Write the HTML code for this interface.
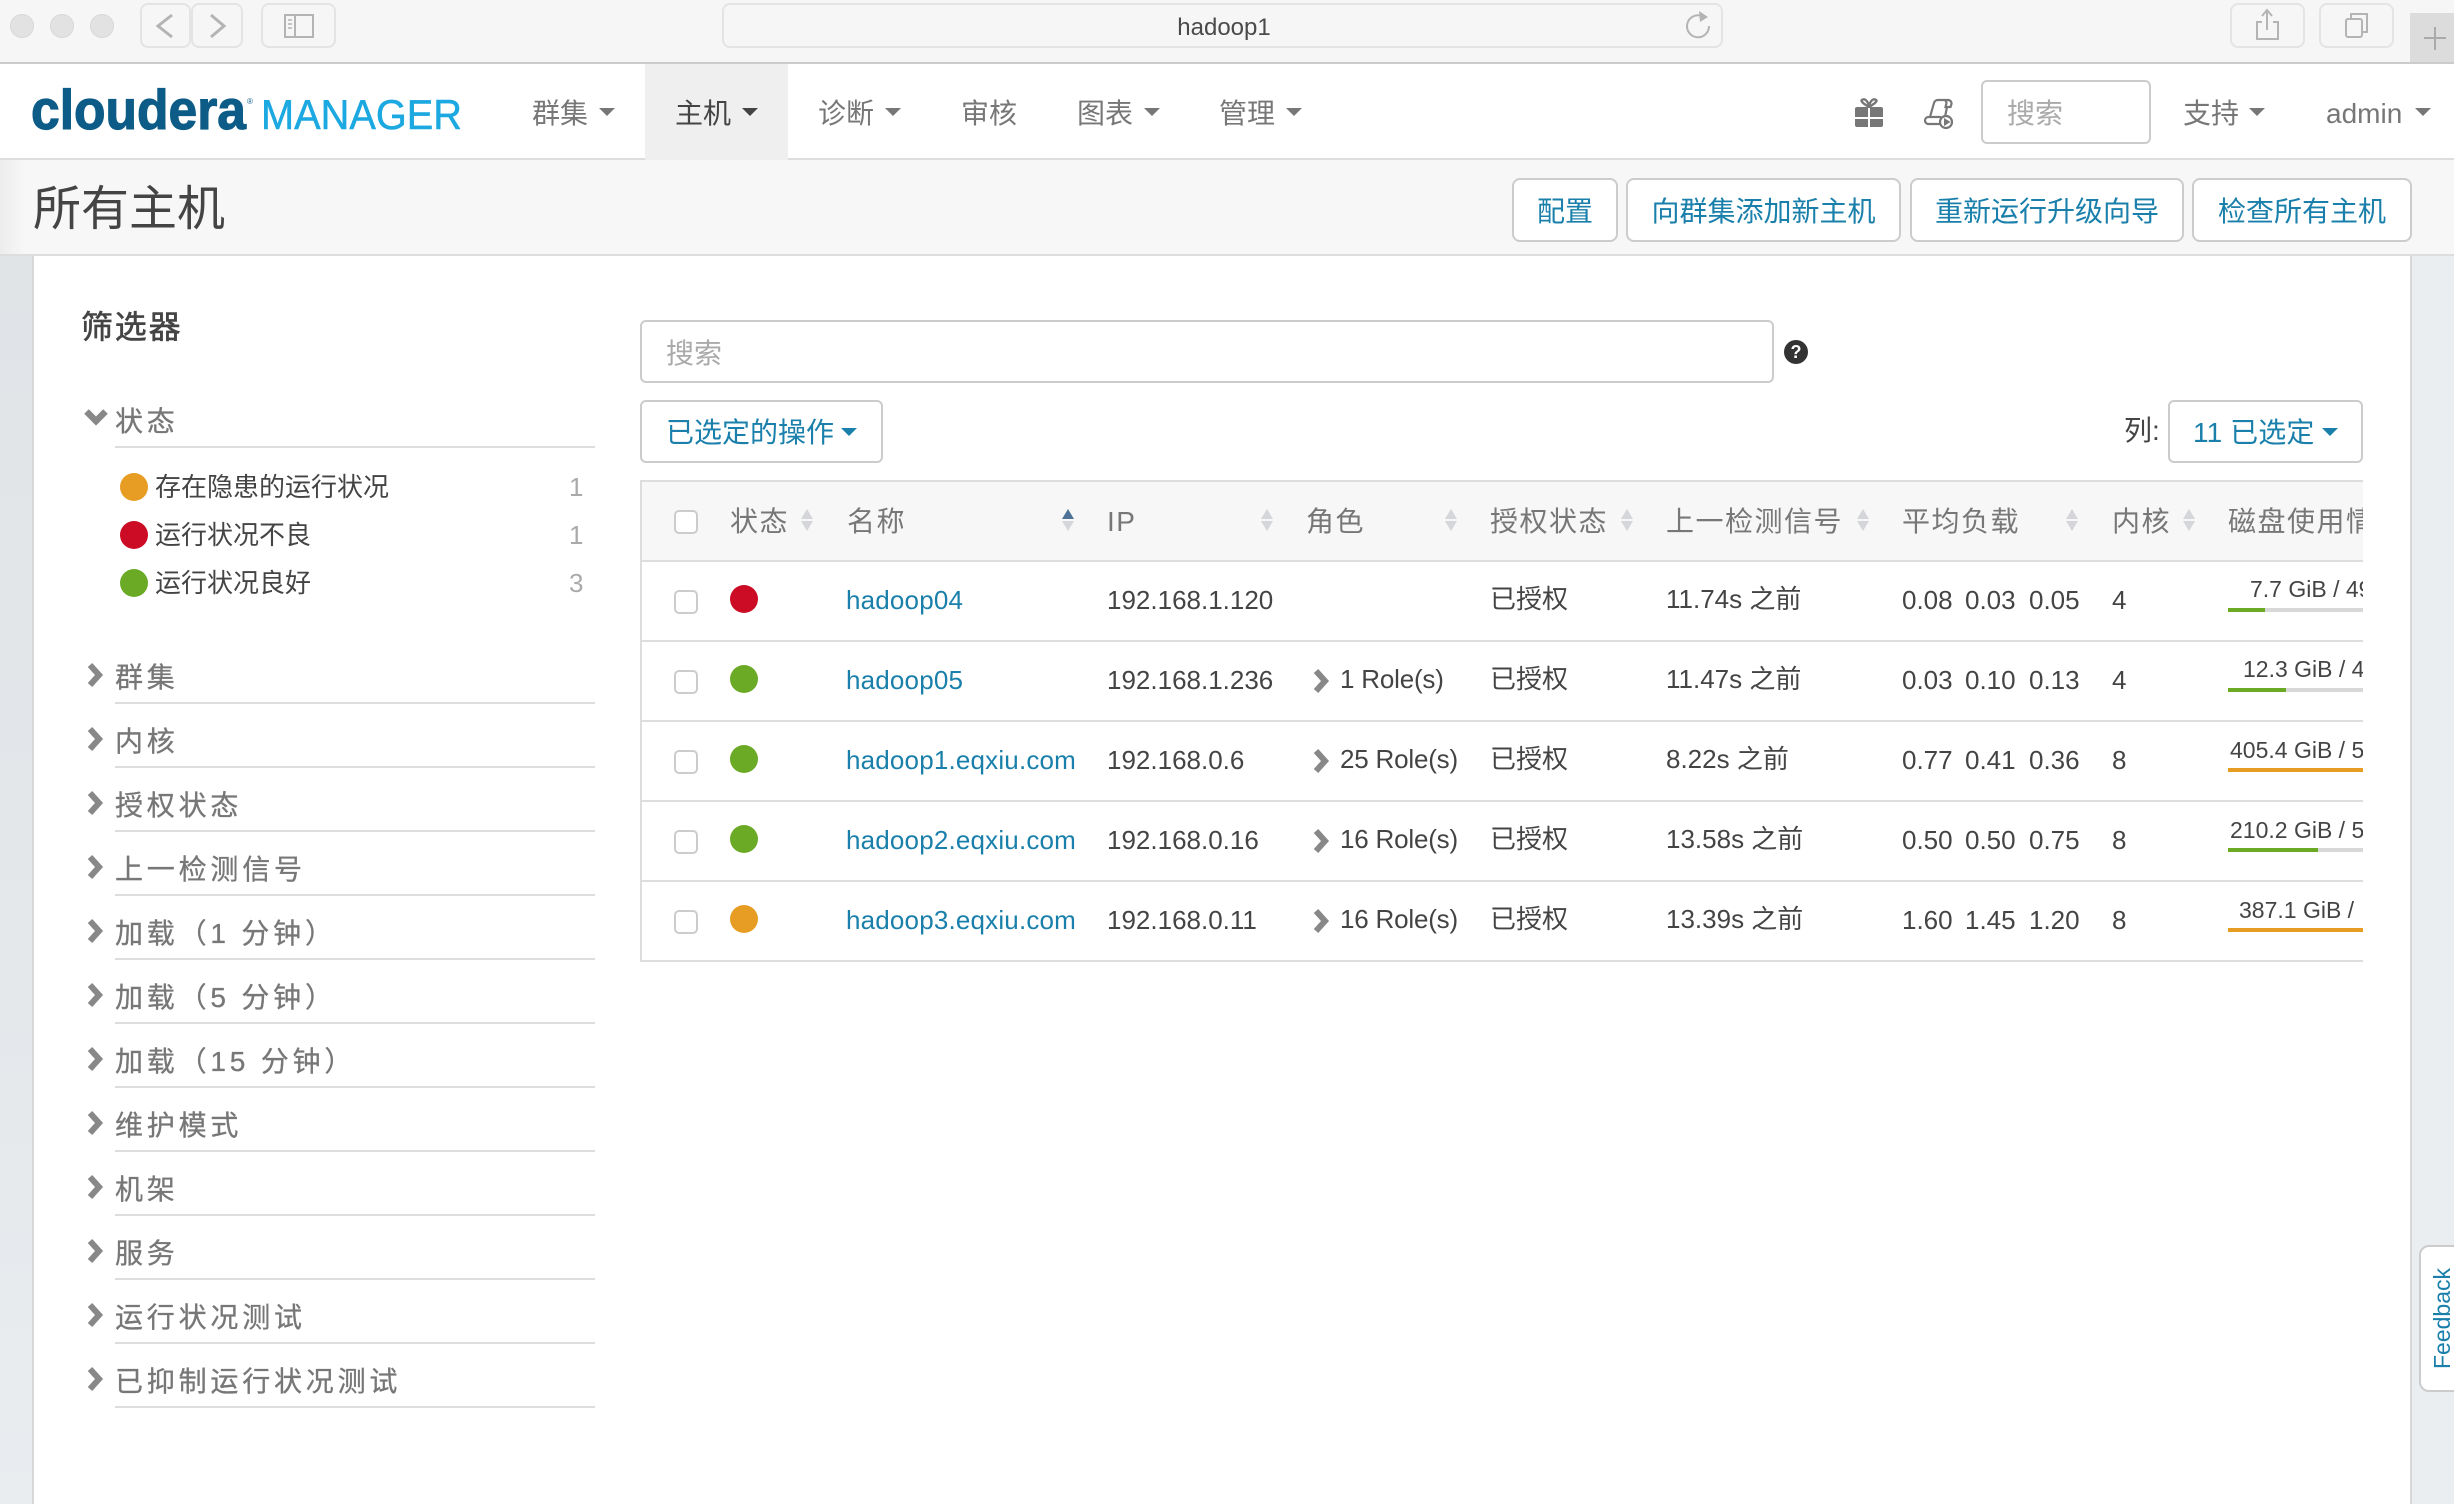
<!DOCTYPE html>
<html lang="zh-CN"><head><meta charset="utf-8"><title>所有主机</title>
<style>
html,body{margin:0;padding:0;width:2454px;height:1504px;overflow:hidden;background:#fff}
body{position:relative;font-family:"Liberation Sans","Noto Sans CJK SC",sans-serif;font-size:26px;color:#444}
.a{position:absolute;box-sizing:border-box}
.t{position:absolute;white-space:nowrap;line-height:40px;height:40px}
.tb{position:absolute;box-sizing:border-box;top:3px;height:45px;border:2px solid #e4e4e4;border-radius:8px;background:#f6f6f6}
.n{font-size:28px;color:#777;margin-top:2px}
.ar{position:absolute;width:0;height:0;border-left:8px solid transparent;border-right:8px solid transparent;border-top:8px solid #777}
.btn{position:absolute;box-sizing:border-box;top:178px;height:64px;background:#fff;border:2px solid #ccc;border-radius:8px;color:#1a80ab;font-size:28px;line-height:63px;text-align:center;white-space:nowrap}
.f{font-size:28px;color:#777;letter-spacing:3.8px;left:115px;margin-top:2px;-webkit-text-stroke:.3px #777}
.u{position:absolute;left:115px;width:480px;height:2px;background:#ddd}
.dot{position:absolute;width:28px;height:28px;border-radius:50%}
.g{background:#6aaa25}.r{background:#cc0b25}.o{background:#e79d24}
.h{font-size:28px;color:#777;letter-spacing:1.5px;top:502px}
.s{position:absolute;top:509px;width:13px;height:22px}
.s:before,.s:after{content:"";position:absolute;left:0;width:0;height:0;border-left:6.5px solid transparent;border-right:6.5px solid transparent}
.s:before{top:0;border-bottom:10px solid #d4d6d9}
.s:after{bottom:0;border-top:10px solid #d4d6d9}
.s.on:before{border-bottom-color:#4f7299}
.hl{position:absolute;left:640px;width:1723px;height:2px;background:#ddd}
.cb{position:absolute;left:674px;width:24px;height:24px;box-sizing:border-box;border:2px solid #ccc;border-radius:5px;background:#fff}
.l{color:#1a80ab}
.nm{letter-spacing:.18px}
.ro{letter-spacing:-.2px}
.bar{position:absolute;left:2228px;width:135px;height:4px;background:#d8d8d8;overflow:hidden}
.bar i{display:block;height:4px}
.dk{position:absolute;white-space:nowrap;font-size:23px;line-height:30px;height:30px;overflow:hidden;color:#444}
</style></head><body>

<!-- browser toolbar -->
<div class="a" style="left:0;top:0;width:2454px;height:64px;background:#f6f6f6;border-bottom:2px solid #ccc"></div>
<div class="dot" style="left:10px;top:14px;width:24px;height:24px;background:#e2e2e2;border:1px solid #d8d8d8;box-sizing:border-box"></div>
<div class="dot" style="left:50px;top:14px;width:24px;height:24px;background:#e2e2e2;border:1px solid #d8d8d8;box-sizing:border-box"></div>
<div class="dot" style="left:90px;top:14px;width:24px;height:24px;background:#e2e2e2;border:1px solid #d8d8d8;box-sizing:border-box"></div>
<div class="tb" style="left:140px;width:51px"></div>
<div class="tb" style="left:191px;width:52px"></div>
<div class="tb" style="left:261px;width:75px"></div>
<div class="tb" style="left:722px;width:1001px"></div>
<div class="tb" style="left:2230px;width:75px"></div>
<div class="tb" style="left:2319px;width:75px"></div>
<div class="a" style="left:2410px;top:13px;width:44px;height:49px;background:#dcdcdc"></div>
<svg class="a" style="left:0;top:0" width="2454" height="64" fill="none" stroke="#b4b4b4" stroke-width="2.5">
<path d="M172 15 L158 26 L172 37" stroke-width="3"/>
<path d="M211 15 L224 26 L211 37" stroke-width="3"/>
<rect x="285" y="15" width="28" height="22" stroke-width="2"/><path d="M295 15V37" stroke-width="2"/><path d="M288 20h4M288 24h4M288 28h4" stroke-width="1.5"/>
<path d="M1702 16 A11 11 0 1 0 1709 26" stroke-width="2"/><path d="M1699 11 L1708 17 L1700 22Z" fill="#b4b4b4" stroke="none"/>
<path d="M2262 22h-5v17h21v-17h-5" stroke-width="2"/><path d="M2267 30V11M2262 16l5-6 5 6" stroke-width="2"/>
<rect x="2346" y="19" width="16" height="18" rx="2" stroke-width="2"/><path d="M2351 19v-5h16v18h-5" stroke-width="2"/>
<path d="M2435 27v23M2424 38h22" stroke-width="2" stroke="#aaa"/>
</svg>
<div class="t" style="left:1174px;top:8px;font-size:24px;width:100px;text-align:center;color:#4a4a4a">hadoop1</div>

<!-- nav -->
<div class="a" style="left:0;top:64px;width:2454px;height:96px;background:#fff;border-bottom:2px solid #ddd"></div>
<div class="a" style="left:645px;top:64px;width:143px;height:96px;background:#f0eff0"></div>
<svg class="a" style="left:20px;top:80px" width="450" height="60">
<text x="11" y="49" font-family="Liberation Sans" font-weight="700" font-size="56" fill="#0d5c87" textLength="215" lengthAdjust="spacingAndGlyphs" stroke="#0d5c87" stroke-width="1.2">cloudera</text>
<text x="227" y="24" font-family="Liberation Sans" font-size="8" fill="#0d5c87">®</text>
<text x="241" y="49" font-family="Liberation Sans" font-size="42" fill="#1ca8e0" stroke="#1ca8e0" stroke-width=".5" textLength="201" lengthAdjust="spacingAndGlyphs">MANAGER</text>
</svg>
<div class="t n" style="left:532px;top:92px">群集</div><div class="ar" style="left:599px;top:108px"></div>
<div class="t n" style="left:675px;top:92px;color:#444">主机</div><div class="ar" style="left:742px;top:108px;border-top-color:#444"></div>
<div class="t n" style="left:818px;top:92px">诊断</div><div class="ar" style="left:885px;top:108px"></div>
<div class="t n" style="left:961px;top:92px">审核</div>
<div class="t n" style="left:1077px;top:92px">图表</div><div class="ar" style="left:1144px;top:108px"></div>
<div class="t n" style="left:1219px;top:92px">管理</div><div class="ar" style="left:1286px;top:108px"></div>
<svg class="a" style="left:1850px;top:92px" width="115" height="42" fill="none">
<path d="M19 15C14 12 10 9 12 8C14 6 18 8 19 15C20 8 24 6 26 8C28 9 24 12 19 15Z" stroke="#777" stroke-width="2.4"/>
<path d="M7 15H18V25H5V17a2 2 0 0 1 2-2ZM20 15H31a2 2 0 0 1 2 2V25H20ZM5 27H18V35H7a2 2 0 0 1-2-2ZM20 27H33V33a2 2 0 0 1-2 2H20Z" fill="#777"/>
<g stroke="#777" stroke-width="2.200">
<path d="M80 25L84 11a4 4 0 0 1 4-3H98a3.500 3.500 0 0 1 3.500 4l-1 3h-5l1-4a3 3 0 0 0-3-3"/>
<path d="M97 15L95 25"/>
<rect x="75" y="25" width="18" height="7" rx="3.500"/>
<circle cx="96" cy="30" r="6" fill="#fff"/>
</g>
<path d="M94 26L100.500 30L94 34Z" fill="#777"/>
</svg>
<div class="a" style="left:1981px;top:80px;width:170px;height:64px;border:2px solid #ccc;border-radius:6px;background:#fff"></div>
<div class="t" style="left:2007px;top:94px;font-size:28px;color:#aaa">搜索</div>
<div class="t n" style="left:2183px;top:92px">支持</div><div class="ar" style="left:2249px;top:108px"></div>
<div class="t n" style="left:2326px;top:92px">admin</div><div class="ar" style="left:2415px;top:108px"></div>

<!-- subheader -->
<div class="a" style="left:0;top:160px;width:2454px;height:96px;background:#f7f7f7;border-bottom:2px solid #ddd"></div>
<div class="a" style="left:0;top:160px;width:24px;height:94px;background:linear-gradient(90deg,#ececec,#f7f7f7)"></div>
<div class="t" style="left:33px;top:190px;font-size:48px;color:#444;height:40px;line-height:40px">所有主机</div>
<div class="btn" style="left:1512px;width:106px">配置</div>
<div class="btn" style="left:1626px;width:275px">向群集添加新主机</div>
<div class="btn" style="left:1910px;width:274px">重新运行升级向导</div>
<div class="btn" style="left:2192px;width:220px">检查所有主机</div>

<!-- gutters -->
<div class="a" style="left:0;top:256px;width:34px;height:1248px;background:linear-gradient(180deg,#e0e4e7,#e4e8eb 60%,#e9edf0);border-right:2px solid #d8d8d8"></div>
<div class="a" style="left:2410px;top:256px;width:44px;height:1248px;background:#ebeef1;border-left:2px solid #d8d8d8"></div>

<!-- filter -->
<div class="t" style="left:81px;top:307px;font-size:32px;color:#444;letter-spacing:1.8px;-webkit-text-stroke:.6px #444">筛选器</div>
<svg class="a" style="left:80px;top:400px" width="32" height="30" fill="none"><path d="M6.500 11.500 L16 21 L25.500 11.500" stroke="#888" stroke-width="6.500"/></svg>
<div class="t f" style="top:400px">状态</div><div class="u" style="top:446px"></div>
<div class="dot o" style="left:120px;top:473px"></div><div class="t" style="left:155px;top:467px">存在隐患的运行状况</div><div class="t" style="left:569px;top:467px;color:#aaa">1</div>
<div class="dot r" style="left:120px;top:521px"></div><div class="t" style="left:155px;top:515px">运行状况不良</div><div class="t" style="left:569px;top:515px;color:#aaa">1</div>
<div class="dot g" style="left:120px;top:569px"></div><div class="t" style="left:155px;top:563px">运行状况良好</div><div class="t" style="left:569px;top:563px;color:#aaa">3</div>

<svg width="0" height="0" style="position:absolute"><symbol id="c" viewBox="0 0 24 30"><path d="M7 5 L16 15 L7 25" fill="none" stroke="#888" stroke-width="6"/></symbol></svg>
<svg class="a" style="left:83px;top:660px" width="24" height="30"><use href="#c"/></svg><div class="t f" style="top:656px">群集</div><div class="u" style="top:702px"></div>
<svg class="a" style="left:83px;top:724px" width="24" height="30"><use href="#c"/></svg><div class="t f" style="top:720px">内核</div><div class="u" style="top:766px"></div>
<svg class="a" style="left:83px;top:788px" width="24" height="30"><use href="#c"/></svg><div class="t f" style="top:784px">授权状态</div><div class="u" style="top:830px"></div>
<svg class="a" style="left:83px;top:852px" width="24" height="30"><use href="#c"/></svg><div class="t f" style="top:848px">上一检测信号</div><div class="u" style="top:894px"></div>
<svg class="a" style="left:83px;top:916px" width="24" height="30"><use href="#c"/></svg><div class="t f" style="top:912px">加载（1 分钟）</div><div class="u" style="top:958px"></div>
<svg class="a" style="left:83px;top:980px" width="24" height="30"><use href="#c"/></svg><div class="t f" style="top:976px">加载（5 分钟）</div><div class="u" style="top:1022px"></div>
<svg class="a" style="left:83px;top:1044px" width="24" height="30"><use href="#c"/></svg><div class="t f" style="top:1040px">加载（15 分钟）</div><div class="u" style="top:1086px"></div>
<svg class="a" style="left:83px;top:1108px" width="24" height="30"><use href="#c"/></svg><div class="t f" style="top:1104px">维护模式</div><div class="u" style="top:1150px"></div>
<svg class="a" style="left:83px;top:1172px" width="24" height="30"><use href="#c"/></svg><div class="t f" style="top:1168px">机架</div><div class="u" style="top:1214px"></div>
<svg class="a" style="left:83px;top:1236px" width="24" height="30"><use href="#c"/></svg><div class="t f" style="top:1232px">服务</div><div class="u" style="top:1278px"></div>
<svg class="a" style="left:83px;top:1300px" width="24" height="30"><use href="#c"/></svg><div class="t f" style="top:1296px">运行状况测试</div><div class="u" style="top:1342px"></div>
<svg class="a" style="left:83px;top:1364px" width="24" height="30"><use href="#c"/></svg><div class="t f" style="top:1360px">已抑制运行状况测试</div><div class="u" style="top:1406px"></div>

<!-- search + actions -->
<div class="a" style="left:640px;top:320px;width:1134px;height:63px;border:2px solid #ccc;border-radius:6px;background:#fff"></div>
<div class="t" style="left:666px;top:334px;font-size:28px;color:#aaa">搜索</div>
<div class="dot" style="left:1784px;top:340px;width:24px;height:24px;background:#333;color:#fff;font-size:18px;font-weight:700;line-height:24px;text-align:center">?</div>
<div class="a" style="left:640px;top:400px;width:243px;height:63px;border:2px solid #ccc;border-radius:6px;background:#fff"></div>
<div class="t l" style="left:666px;top:413px;font-size:28px">已选定的操作</div><div class="ar" style="left:841px;top:428px;border-top-color:#1a80ab"></div>
<div class="t" style="left:2124px;top:411px;font-size:28px">列:</div>
<div class="a" style="left:2168px;top:400px;width:195px;height:63px;border:2px solid #ccc;border-radius:6px;background:#fff"></div>
<div class="t l" style="left:2193px;top:413px;font-size:28px;letter-spacing:.1px">11 已选定</div><div class="ar" style="left:2322px;top:428px;border-top-color:#1a80ab"></div>

<!-- table -->
<div class="a" style="left:640px;top:480px;width:1723px;height:82px;background:#f7f7f7"></div>
<div class="hl" style="top:480px"></div><div class="hl" style="top:560px"></div><div class="hl" style="top:640px"></div><div class="hl" style="top:720px"></div><div class="hl" style="top:800px"></div><div class="hl" style="top:880px"></div><div class="hl" style="top:960px"></div>
<div class="a" style="left:640px;top:480px;width:2px;height:482px;background:#ddd"></div>
<div class="cb" style="top:510px"></div>
<div class="t h" style="left:730px">状态</div><div class="s" style="left:801px"></div>
<div class="t h" style="left:847px">名称</div><div class="s on" style="left:1062px"></div>
<div class="t h" style="left:1107px">IP</div><div class="s" style="left:1261px"></div>
<div class="t h" style="left:1306px">角色</div><div class="s" style="left:1445px"></div>
<div class="t h" style="left:1490px">授权状态</div><div class="s" style="left:1621px"></div>
<div class="t h" style="left:1666px">上一检测信号</div><div class="s" style="left:1857px"></div>
<div class="t h" style="left:1902px">平均负载</div><div class="s" style="left:2066px"></div>
<div class="t h" style="left:2112px">内核</div><div class="s" style="left:2183px"></div>
<div class="t h" style="left:2228px;width:135px;overflow:hidden">磁盘使用情况</div>

<!-- row 1 -->
<div class="cb" style="top:590px"></div><div class="dot r" style="left:730px;top:585px"></div>
<div class="t l nm" style="left:846px;top:580px">hadoop04</div><div class="t" style="left:1107px;top:580px">192.168.1.120</div>
<div class="t" style="left:1490px;top:579px">已授权</div><div class="t" style="left:1666px;top:579px">11.74s 之前</div>
<div class="t" style="left:1902px;top:580px">0.08</div><div class="t" style="left:1965px;top:580px">0.03</div><div class="t" style="left:2029px;top:580px">0.05</div><div class="t" style="left:2112px;top:580px">4</div>
<div class="dk" style="left:2250px;top:574px;width:113px">7.7 GiB / 49.1 GiB</div><div class="bar" style="top:608px"><i class="g" style="width:37px"></i></div>
<!-- row 2 -->
<div class="cb" style="top:670px"></div><div class="dot g" style="left:730px;top:665px"></div>
<div class="t l nm" style="left:846px;top:660px">hadoop05</div><div class="t" style="left:1107px;top:660px">192.168.1.236</div>
<svg class="a" style="left:1309px;top:666px" width="24" height="30"><use href="#c"/></svg><div class="t ro" style="left:1340px;top:659px">1 Role(s)</div>
<div class="t" style="left:1490px;top:659px">已授权</div><div class="t" style="left:1666px;top:659px">11.47s 之前</div>
<div class="t" style="left:1902px;top:660px">0.03</div><div class="t" style="left:1965px;top:660px">0.10</div><div class="t" style="left:2029px;top:660px">0.13</div><div class="t" style="left:2112px;top:660px">4</div>
<div class="dk" style="left:2243px;top:654px;width:120px">12.3 GiB / 49.1 GiB</div><div class="bar" style="top:688px"><i class="g" style="width:58px"></i></div>
<!-- row 3 -->
<div class="cb" style="top:750px"></div><div class="dot g" style="left:730px;top:745px"></div>
<div class="t l nm" style="left:846px;top:740px">hadoop1.eqxiu.com</div><div class="t" style="left:1107px;top:740px">192.168.0.6</div>
<svg class="a" style="left:1309px;top:746px" width="24" height="30"><use href="#c"/></svg><div class="t ro" style="left:1340px;top:739px">25 Role(s)</div>
<div class="t" style="left:1490px;top:739px">已授权</div><div class="t" style="left:1666px;top:739px">8.22s 之前</div>
<div class="t" style="left:1902px;top:740px">0.77</div><div class="t" style="left:1965px;top:740px">0.41</div><div class="t" style="left:2029px;top:740px">0.36</div><div class="t" style="left:2112px;top:740px">8</div>
<div class="dk" style="left:2230px;top:735px;width:133px">405.4 GiB / 5.4 TiB</div><div class="bar" style="top:768px"><i class="o" style="width:135px"></i></div>
<!-- row 4 -->
<div class="cb" style="top:830px"></div><div class="dot g" style="left:730px;top:825px"></div>
<div class="t l nm" style="left:846px;top:820px">hadoop2.eqxiu.com</div><div class="t" style="left:1107px;top:820px">192.168.0.16</div>
<svg class="a" style="left:1309px;top:826px" width="24" height="30"><use href="#c"/></svg><div class="t ro" style="left:1340px;top:819px">16 Role(s)</div>
<div class="t" style="left:1490px;top:819px">已授权</div><div class="t" style="left:1666px;top:819px">13.58s 之前</div>
<div class="t" style="left:1902px;top:820px">0.50</div><div class="t" style="left:1965px;top:820px">0.50</div><div class="t" style="left:2029px;top:820px">0.75</div><div class="t" style="left:2112px;top:820px">8</div>
<div class="dk" style="left:2230px;top:815px;width:133px">210.2 GiB / 5.4 TiB</div><div class="bar" style="top:848px"><i class="g" style="width:90px"></i></div>
<!-- row 5 -->
<div class="cb" style="top:910px"></div><div class="dot o" style="left:730px;top:905px"></div>
<div class="t l nm" style="left:846px;top:900px">hadoop3.eqxiu.com</div><div class="t" style="left:1107px;top:900px">192.168.0.11</div>
<svg class="a" style="left:1309px;top:906px" width="24" height="30"><use href="#c"/></svg><div class="t ro" style="left:1340px;top:899px">16 Role(s)</div>
<div class="t" style="left:1490px;top:899px">已授权</div><div class="t" style="left:1666px;top:899px">13.39s 之前</div>
<div class="t" style="left:1902px;top:900px">1.60</div><div class="t" style="left:1965px;top:900px">1.45</div><div class="t" style="left:2029px;top:900px">1.20</div><div class="t" style="left:2112px;top:900px">8</div>
<div class="dk" style="left:2239px;top:895px;width:124px">387.1 GiB /</div><div class="bar" style="top:928px"><i class="o" style="width:135px"></i></div>

<!-- feedback -->
<div class="a" style="left:2419px;top:1245px;width:50px;height:147px;background:#fff;border:2px solid #ccc;border-radius:10px"></div>
<div class="a" style="left:2419px;top:1245px;width:35px;height:147px;overflow:hidden">
<div style="position:absolute;left:14px;top:124px;width:101px;height:18px;line-height:18px;font-size:23px;color:#1a80ab;white-space:nowrap;transform:rotate(-90deg);transform-origin:0 0">Feedback</div>
</div>
</body></html>
